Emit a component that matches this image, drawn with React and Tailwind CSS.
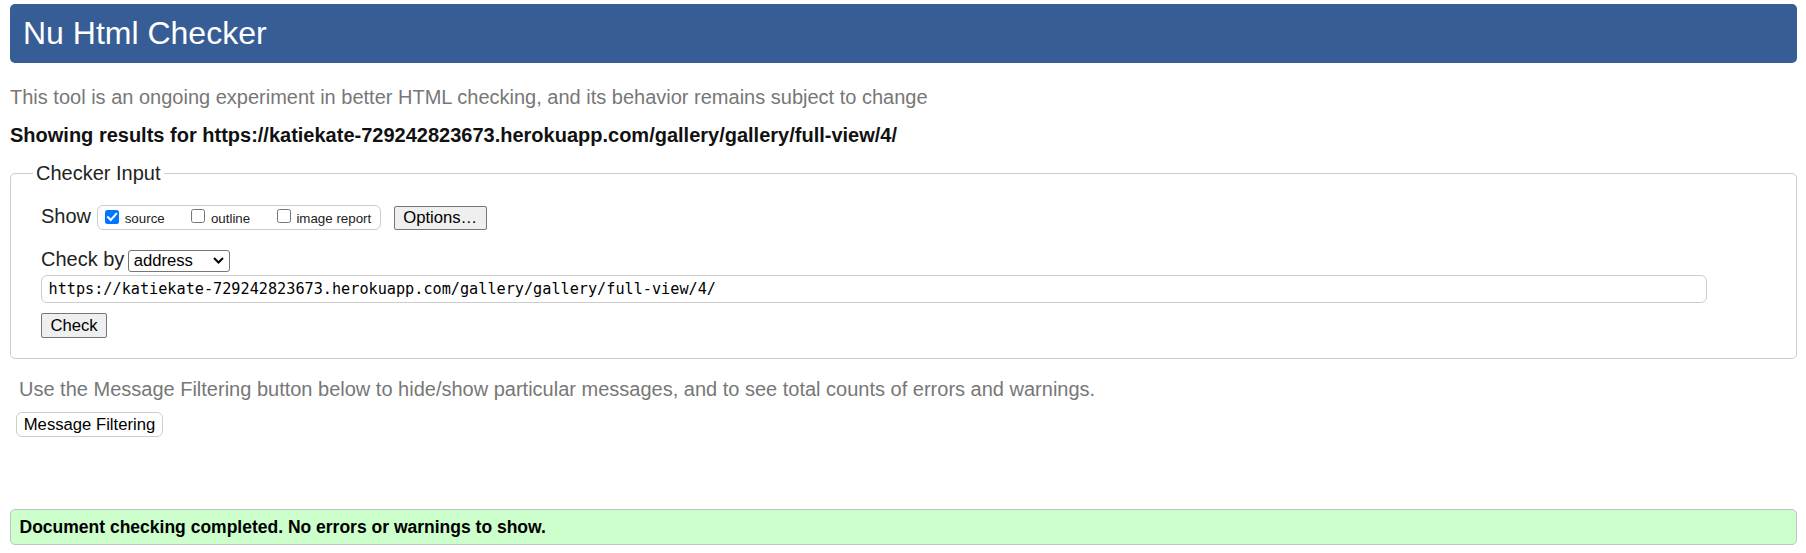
import React from 'react'

const url = 'https://katiekate-729242823673.herokuapp.com/gallery/gallery/full-view/4/'

function Box({ checked }) {
  if (checked) {
    return (
      <span className="mb-[1.3px] inline-flex h-[14px] w-[14px] shrink-0 items-center justify-center rounded-[2.5px] bg-[#0075ff]">
        <svg width="12" height="12" viewBox="0 0 12 12" fill="none">
          <path d="M2 6.2 L4.8 9 L10.2 2.8" stroke="white" strokeWidth="2" strokeLinecap="square" />
        </svg>
      </span>
    )
  }
  return <span className="mb-[1.3px] inline-block h-[14px] w-[14px] shrink-0 rounded-[2.5px] border border-[#767676] bg-white" />
}

function Option({ label, checked, first }) {
  return (
    <label className={`flex items-baseline gap-[5.7px] ${first ? '' : 'ml-[26.5px]'}`}>
      <Box checked={checked} />
      <span>{label}</span>
    </label>
  )
}

export default function App() {
  return (
    <div className="min-h-screen bg-white pl-[10px] pr-[9px] pt-[4px] font-['Liberation_Sans',Arial,sans-serif] text-[20px] leading-[23px]">
      {/* Title bar */}
      <header className="flex h-[59px] items-center rounded-[5px] bg-[#365d95] pl-[13px]">
        <h1 className="text-[32px] font-normal leading-[37px] text-white">Nu Html Checker</h1>
      </header>

      <p className="mt-[23px] text-[#777]">
        This tool is an ongoing experiment in better HTML checking, and its behavior remains subject to change
      </p>
      <p className="mt-[15.4px] font-bold text-[#111]">Showing results for {url}</p>

      {/* Checker input */}
      <fieldset className="mt-[15px] rounded-[5px] border border-[#cccccc] pl-[22px] pr-[20px]">
        <legend className="px-[3px] text-[#222]">Checker Input</legend>
        <div className="pl-[8px] pt-[20px] pb-[19.7px]">
          <div className="flex items-baseline">
            <span className="text-[#222]">Show</span>
            <div className="ml-[5.7px] inline-flex items-baseline rounded-[6px] border border-[#cccccc] pb-[2.7px] pl-[7.3px] pr-[8.5px] pt-[3px] text-[13.33px] leading-[15.33px] text-[#222]">
              <Option label="source" checked first />
              <Option label="outline" />
              <Option label="image report" />
            </div>
            <button className="ml-[13px] h-[24.7px] w-[93px] rounded-[2px] border border-[#767676] bg-[#efefef] text-[16.67px] leading-[19.2px] text-black">
              Options…
            </button>
          </div>

          <div className="mt-[17.9px] flex items-baseline">
            <span className="text-[#222]">Check by</span>
            <div className="ml-[3.3px] flex h-[22.7px] w-[102px] items-center justify-between rounded-[3px] border border-[#767676] bg-white pl-[5px] pr-[4.5px] text-[16.67px] leading-[19.2px] text-black">
              <span>address</span>
              <svg width="11" height="7" viewBox="0 0 11 7" fill="none">
                <path d="M1 1 L5.5 5.5 L10 1" stroke="black" strokeWidth="2" />
              </svg>
            </div>
          </div>

          <div className="mt-[3.2px] flex h-[27.2px] w-[1666px] items-center rounded-[6px] border border-[#cccccc] pl-[6.5px] font-['DejaVu_Sans_Mono','Liberation_Mono',monospace] text-[15.2px] text-black">
            {url}
          </div>

          <button className="mt-[10.6px] h-[25px] w-[66px] rounded-[2px] border border-[#767676] bg-[#efefef] text-[16.67px] leading-[19.2px] text-black">
            Check
          </button>
        </div>
      </fieldset>

      <p className="mt-[18.6px] pl-[9px] text-[#777]">
        Use the Message Filtering button below to hide/show particular messages, and to see total counts of errors and warnings.
      </p>
      <button className="ml-[5.7px] mt-[11.7px] h-[24.4px] w-[147.6px] rounded-[6px] border border-[#cccccc] bg-white text-[16.67px] leading-[19.2px] text-black">
        Message Filtering
      </button>

      {/* Result */}
      <div className="mt-[72.6px] flex h-[36px] items-center rounded-[5px] border border-[#c2c2c2] bg-[#ccffcc] pl-[8.5px]">
        <p className="text-[17.5px] font-bold leading-[20px] text-black">Document checking completed. No errors or warnings to show.</p>
      </div>
    </div>
  )
}
